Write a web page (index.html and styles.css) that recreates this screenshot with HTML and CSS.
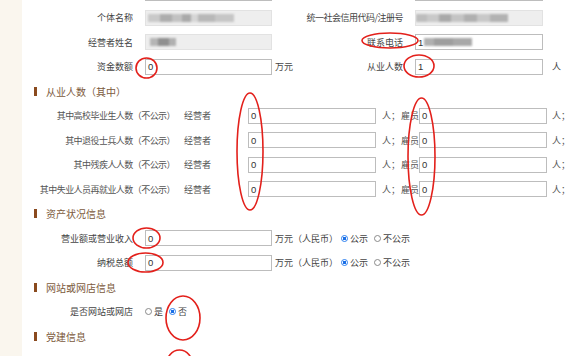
FILE: index.html
```html
<!DOCTYPE html>
<html lang="zh-CN">
<head>
<meta charset="utf-8">
<title>个体工商户年报</title>
<link rel="stylesheet" href="styles.css">
</head>
<body>
<div class="page">
  <aside class="side"></aside>
  <main class="main">
    <div class="form">
      <div class="row">
        <span class="lab"></span>
        <div class="field"></div>
        <span class="mid"><span></span><span class="rlab"></span></span>
        <div class="field wide"></div>
      </div>
      <div class="row">
        <span class="lab">个体名称</span>
        <div class="field ro"><span class="smear s1"></span></div>
        <span class="mid"><span></span><span class="rlab tight">统一社会信用代码/注册号</span></span>
        <div class="field wide ro"><span class="smear s3"></span></div>
      </div>
      <div class="row">
        <span class="lab">经营者姓名</span>
        <div class="field ro"><span class="smear s2"></span></div>
        <span class="mid"><span></span><span class="rlab">联系电话</span></span>
        <div class="field wide"><span class="val">1</span><span class="smear s4"></span></div>
      </div>
      <div class="row">
        <span class="lab">资金数额</span>
        <div class="field"><span class="val">0</span></div>
        <span class="mid"><span class="unit">万元</span><span class="rlab">从业人数</span></span>
        <div class="field wide"><span class="val">1</span></div>
        <span class="unit-r">人</span>
      </div>

      <div class="sec"><i class="bar"></i><span class="sec-t">从业人数（其中）</span></div>
      <div class="srow">
        <span class="slab">其中高校毕业生人数（不公示）</span>
        <span class="who">经营者</span>
        <div class="field wide"><span class="val">0</span></div>
        <span class="ren">人；</span><span class="emp">雇员</span>
        <div class="field wide"><span class="val">0</span></div>
        <span class="ren2">人；</span>
      </div>
      <div class="srow">
        <span class="slab">其中退役士兵人数（不公示）</span>
        <span class="who">经营者</span>
        <div class="field wide"><span class="val">0</span></div>
        <span class="ren">人；</span><span class="emp">雇员</span>
        <div class="field wide"><span class="val">0</span></div>
        <span class="ren2">人；</span>
      </div>
      <div class="srow">
        <span class="slab">其中残疾人人数（不公示）</span>
        <span class="who">经营者</span>
        <div class="field wide"><span class="val">0</span></div>
        <span class="ren">人；</span><span class="emp">雇员</span>
        <div class="field wide"><span class="val">0</span></div>
        <span class="ren2">人；</span>
      </div>
      <div class="srow">
        <span class="slab">其中失业人员再就业人数（不公示）</span>
        <span class="who">经营者</span>
        <div class="field wide"><span class="val">0</span></div>
        <span class="ren">人；</span><span class="emp">雇员</span>
        <div class="field wide"><span class="val">0</span></div>
        <span class="ren2">人；</span>
      </div>

      <div class="sec"><i class="bar"></i><span class="sec-t">资产状况信息</span></div>
      <div class="row">
        <span class="lab">营业额或营业收入</span>
        <div class="field"><span class="val">0</span></div>
        <span class="unit">万元（人民币）</span>
        <label class="opt first"><input type="radio" name="p1" checked>公示</label>
        <label class="opt"><input type="radio" name="p1">不公示</label>
      </div>
      <div class="row">
        <span class="lab">纳税总额</span>
        <div class="field"><span class="val">0</span></div>
        <span class="unit">万元（人民币）</span>
        <label class="opt first"><input type="radio" name="p2" checked>公示</label>
        <label class="opt"><input type="radio" name="p2">不公示</label>
      </div>

      <div class="sec"><i class="bar"></i><span class="sec-t">网站或网店信息</span></div>
      <div class="row">
        <span class="lab">是否网站或网店</span>
        <label class="opt web"><input type="radio" name="w">是</label>
        <label class="opt"><input type="radio" name="w" checked>否</label>
      </div>

      <div class="sec"><i class="bar"></i><span class="sec-t">党建信息</span></div>
    </div>
  </main>
  <svg class="marks" width="576" height="356" viewBox="0 0 576 356">
    <g fill="none" stroke="#e3201b" stroke-width="1.6">
      <ellipse cx="146.5" cy="68" rx="10.5" ry="10"/>
      <ellipse cx="390" cy="40.5" rx="28" ry="7.5"/>
      <ellipse cx="419" cy="66" rx="15" ry="11"/>
      <ellipse cx="250" cy="151.5" rx="13" ry="58.5"/>
      <ellipse cx="421.5" cy="156.5" rx="13.5" ry="58.5"/>
      <ellipse cx="146.5" cy="238" rx="13.5" ry="10"/>
      <ellipse cx="145.5" cy="262.5" rx="17.5" ry="9.5"/>
      <ellipse cx="183" cy="318" rx="17" ry="22"/>
      <ellipse cx="179.5" cy="366" rx="13.5" ry="16"/>
    </g>
  </svg>
</div>
</body>
</html>
```

FILE: styles.css
```css
* { box-sizing: border-box; }
html, body { margin: 0; padding: 0; }
body {
  font-family: "Noto Sans CJK SC", "Microsoft YaHei", sans-serif;
  font-size: 9px;
  color: #444;
  background: #fff;
}
.page {
  position: relative;
  display: flex;
  width: 576px;
  height: 356px;
  overflow: hidden;
}
.side {
  flex: none;
  width: 22px;
  background: #faf6ee;
}
.main {
  flex: 1;
  background: #fff;
}
.form {
  margin-top: -19.25px;
}
.row, .srow, .sec {
  display: flex;
  align-items: center;
  height: 24.5px;
  white-space: nowrap;
}
.lab {
  flex: none;
  width: 123px;
  padding-right: 12px;
  text-align: right;
}
.field {
  flex: none;
  display: flex;
  align-items: center;
  width: 127px;
  height: 16px;
  padding-left: 2px;
  border: 1px solid #bdbdbd;
  background: #fff;
  overflow: hidden;
}
.field.wide { width: 128px; }
.field.ro {
  background: #eeeeee;
  border-color: #e2e2e2;
}
.val {
  font-family: "Liberation Sans", Arial, sans-serif;
  font-size: 9.5px;
  color: #333;
}
.smear {
  display: block;
  height: 8px;
  filter: blur(1.3px);
}
.s1 {
  width: 86px;
  background: linear-gradient(90deg, #c9c9c9 0 14%, #adadad 14% 28%, #c2c2c2 28% 40%, #a9a9a9 40% 50%, #d6d6d6 50% 58%, #b8b8b8 58% 78%, #c6c6c6 78%);
}
.s2 {
  width: 26px;
  margin-left: 2px;
  background: linear-gradient(90deg, #b5b5b5 0 30%, #8f8f8f 30% 75%, #b0b0b0 75%);
}
.s3 {
  width: 92px;
  margin-left: -2px;
  background: linear-gradient(90deg, #bdbdbd 0 12%, #c9c9c9 12% 25%, #a9a9a9 25% 38%, #c4c4c4 38% 52%, #b0b0b0 52% 66%, #c8c8c8 66% 80%, #b2b2b2 80%);
}
.s4 {
  width: 48px;
  margin-left: 1px;
  background: linear-gradient(90deg, #b0b0b0 0 20%, #9e9e9e 20% 60%, #a8a8a8 60%);
}
.mid {
  flex: none;
  display: flex;
  justify-content: space-between;
  width: 143px;
}
.unit { padding-left: 3px; }
.rlab { padding-right: 12px; }
.rlab.tight { letter-spacing: -0.5px; }
.unit-r { padding-left: 9px; }

.sec { padding-left: 12px; }
.bar {
  display: block;
  width: 3px;
  height: 9px;
  background: #8a4a1e;
}
.sec-t {
  margin-left: 9px;
  font-size: 10px;
  color: #7c5a3c;
}

.slab {
  flex: none;
  width: 156px;
  padding-right: 3px;
  text-align: right;
  letter-spacing: -0.55px;
  color: #555;
}
.who {
  flex: none;
  width: 70px;
  padding-left: 6px;
  color: #555;
}
.ren {
  flex: none;
  width: 25px;
  padding-left: 6px;
  color: #555;
}
.emp {
  flex: none;
  width: 18px;
  color: #555;
}
.ren2 {
  padding-left: 5px;
  color: #555;
}

.opt {
  display: flex;
  align-items: center;
  gap: 2px;
  margin-left: 6px;
}
.opt.first { margin-left: 3px; }
.opt.web { margin-left: 0; }
.opt input {
  appearance: none;
  -webkit-appearance: none;
  width: 7px;
  height: 7px;
  margin: 0;
  border: 1px solid #8a8a8a;
  border-radius: 50%;
  background: #fff;
}
.opt input:checked {
  border-color: #2b7ff0;
  background: radial-gradient(circle, #1a6fe6 0 45%, #fff 50%);
}
.marks {
  position: absolute;
  left: 0;
  top: 0;
  pointer-events: none;
}
```
